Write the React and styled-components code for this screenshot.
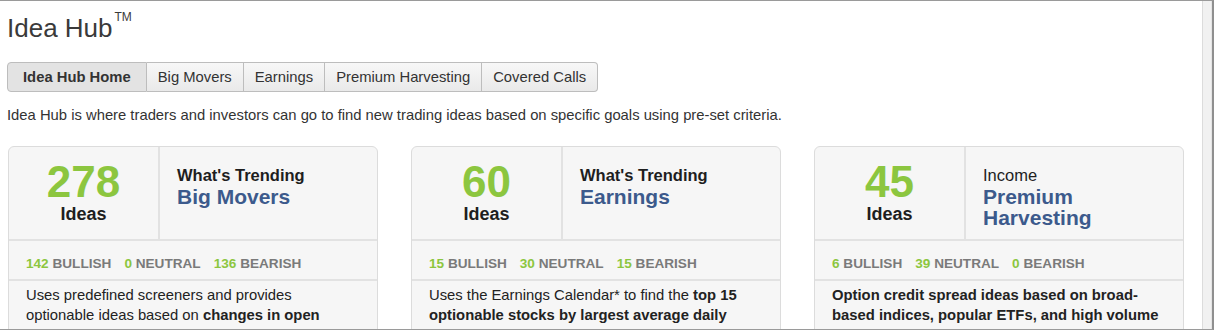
import React from "react";
import styled, { createGlobalStyle } from "styled-components";

const GlobalStyle = createGlobalStyle`
  html, body {
    margin: 0;
    padding: 0;
    background: #ffffff;
  }
  body {
    font-family: "Liberation Sans", Arial, sans-serif;
    color: #333333;
  }
`;

const Frame = styled.div`
  display: flex;
  height: 330px;
  box-sizing: border-box;
  border-top: 1px solid #9a9a9a;
  border-bottom: 1px solid #9a9a9a;
  border-right: 2px solid #8f8f8f;
  overflow: hidden;
`;

const Page = styled.main`
  flex: 1;
  padding: 0 7px;
  min-width: 0;
`;

const ScrollTrack = styled.div`
  width: 8px;
  flex-shrink: 0;
  background: #f1f1f1;
  border-left: 1px solid #dcdcdc;
  border-right: 1px solid #e4e4e4;
`;

const Title = styled.h1`
  margin: 12px 0 0;
  font-size: 26px;
  line-height: 30px;
  font-weight: normal;
  color: #3a3a3a;

  sup {
    font-size: 12px;
    line-height: 12px;
    position: relative;
    top: -2px;
    vertical-align: top;
    margin-left: 2px;
  }
`;

const Tabs = styled.div`
  display: flex;
  margin-top: 19px;
`;

const Tab = styled.button`
  font-family: inherit;
  font-size: 14.8px;
  font-weight: ${(p) => (p.active ? "bold" : "normal")};
  color: #333;
  height: 30px;
  padding: 0 ${(p) => (p.active ? "15px" : "11px")};
  border: 1px solid #bdbdbd;
  border-left-width: 0;
  background: ${(p) =>
    p.active ? "#e3e3e3" : "linear-gradient(#f7f7f7, #e9e9e9)"};
  cursor: pointer;

  &:first-child {
    border-left-width: 1px;
    border-radius: 4px 0 0 4px;
  }
  &:last-child {
    border-radius: 0 4px 4px 0;
  }
`;

const Intro = styled.p`
  margin: 14px 0 0;
  font-size: 14.8px;
  line-height: 18px;
  color: #333;
`;

const CardGrid = styled.div`
  display: grid;
  grid-template-columns: repeat(3, 370px);
  gap: 33px;
  margin: 22px 0 0 1px;
`;

const Card = styled.section`
  background: #f6f6f6;
  border: 1px solid #dcdcdc;
  border-radius: 6px;
`;

const CardTop = styled.div`
  display: flex;
  height: 92px;
  border-bottom: 2px solid #e2e2e2;
`;

const CountBox = styled.div`
  width: 151px;
  flex-shrink: 0;
  border-right: 2px solid #e2e2e2;
  text-align: center;
  padding-top: 13px;
  box-sizing: border-box;
`;

const Count = styled.div`
  font-size: 44px;
  line-height: 44px;
  font-weight: bold;
  color: #8cc63f;
`;

const CountLabel = styled.div`
  font-size: 18px;
  line-height: 20px;
  font-weight: bold;
  color: #1e1e1e;
`;

const Heading = styled.div`
  padding: 19px 8px 0 17px;
`;

const Kicker = styled.div`
  font-size: 16.5px;
  line-height: 18px;
  font-weight: ${(p) => (p.light ? "normal" : "bold")};
  color: #1e1e1e;
`;

const Name = styled.div`
  margin-top: 2px;
  font-size: 21px;
  line-height: 21px;
  font-weight: bold;
  color: #3c5a8c;
`;

const Stats = styled.div`
  display: flex;
  gap: 13px;
  height: 40px;
  align-items: center;
  padding: 7px 0 0 17px;
  box-sizing: border-box;
  border-bottom: 2px solid #e2e2e2;
  font-size: 13.6px;
  font-weight: bold;
  color: #7a7a7a;
`;

const Stat = styled.span`
  b {
    color: #8cc63f;
  }
`;

const Desc = styled.p`
  margin: 0;
  padding: 4px 18px 10px 17px;
  font-size: 14.8px;
  line-height: 20px;
  color: #222;
  font-weight: ${(p) => (p.strong ? "bold" : "normal")};
`;

const tabs = [
  "Idea Hub Home",
  "Big Movers",
  "Earnings",
  "Premium Harvesting",
  "Covered Calls",
];

const cards = [
  {
    count: 278,
    kicker: "What's Trending",
    name: "Big Movers",
    stats: [142, 0, 136],
    desc: (
      <>
        Uses predefined screeners and provides optionable ideas based on{" "}
        <b>changes in open interest</b> and price movement.
      </>
    ),
  },
  {
    count: 60,
    kicker: "What's Trending",
    name: "Earnings",
    stats: [15, 30, 15],
    desc: (
      <>
        Uses the Earnings Calendar* to find the{" "}
        <b>top 15 optionable stocks by largest average daily</b> moves after
        earnings.
      </>
    ),
  },
  {
    count: 45,
    kicker: "Income",
    lightKicker: true,
    name: "Premium Harvesting",
    stats: [6, 39, 0],
    strong: true,
    desc: (
      <>
        Option credit spread ideas based on broad-based indices, popular ETFs,
        and high volume stocks.
      </>
    ),
  },
];

const labels = ["BULLISH", "NEUTRAL", "BEARISH"];

export default function App() {
  return (
    <>
      <GlobalStyle />
      <Frame>
        <Page>
          <Title>
            Idea Hub<sup>TM</sup>
          </Title>
          <Tabs>
            {tabs.map((t, i) => (
              <Tab key={t} active={i === 0 ? 1 : 0}>
                {t}
              </Tab>
            ))}
          </Tabs>
          <Intro>
            Idea Hub is where traders and investors can go to find new trading
            ideas based on specific goals using pre-set criteria.
          </Intro>
          <CardGrid>
            {cards.map((c) => (
              <Card key={c.name}>
                <CardTop>
                  <CountBox>
                    <Count>{c.count}</Count>
                    <CountLabel>Ideas</CountLabel>
                  </CountBox>
                  <Heading>
                    <Kicker light={c.lightKicker ? 1 : 0}>{c.kicker}</Kicker>
                    <Name>{c.name}</Name>
                  </Heading>
                </CardTop>
                <Stats>
                  {c.stats.map((n, i) => (
                    <Stat key={labels[i]}>
                      <b>{n}</b> {labels[i]}
                    </Stat>
                  ))}
                </Stats>
                <Desc strong={c.strong ? 1 : 0}>{c.desc}</Desc>
              </Card>
            ))}
          </CardGrid>
        </Page>
        <ScrollTrack />
      </Frame>
    </>
  );
}
